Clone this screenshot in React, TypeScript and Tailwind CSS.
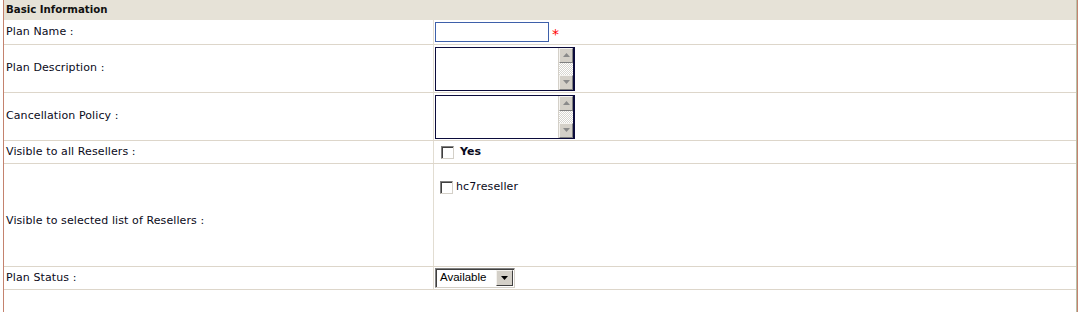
import React from "react";

function ScrollBox() {
  return (
    <div className="flex w-[140px] h-[44px] border border-[#0b0b3b] bg-white">
      <div className="flex-1" />
      <div className="flex flex-col w-[16px] border-l border-[#d4d0c8] border-r border-r-[#0b0b3b]">
        <div className="h-[15px] bg-[#d4d0c8] border-t border-l border-t-[#f4f2ee] border-l-[#f4f2ee] border-b border-r border-b-[#808080] border-r-[#808080] flex items-center justify-center">
          <svg width="7" height="4" viewBox="0 0 7 4"><path d="M3.5 0L7 4H0z" fill="#8a8a8a" /></svg>
        </div>
        <div className="flex-1 bg-[repeating-conic-gradient(#d8d6d0_0_25%,#ffffff_0_50%)] bg-[length:2px_2px]" />
        <div className="h-[15px] bg-[#d4d0c8] border-t border-l border-t-[#f4f2ee] border-l-[#f4f2ee] border-b border-r border-b-[#808080] border-r-[#808080] flex items-center justify-center">
          <svg width="7" height="4" viewBox="0 0 7 4"><path d="M0 0H7L3.5 4z" fill="#8a8a8a" /></svg>
        </div>
      </div>
    </div>
  );
}

function Check() {
  return <span className="inline-block w-[13px] h-[13px] bg-white border border-t-[#808080] border-l-[#808080] border-b-[#d4d0c8] border-r-[#d4d0c8] shadow-[inset_1px_1px_0_#404040]" />;
}

function Row({ label, h, labelPad, children }: { label: string; h: string; labelPad?: string; children?: React.ReactNode }) {
  return (
    <div className={`flex border-b border-[#ddd6ca] ${h}`}>
      <div className={`w-[430px] border-r border-[#e2ddd2] flex items-center pl-[2px] ${labelPad ?? ""}`}>{label}</div>
      <div className="flex-1 flex items-center pl-[1px]">{children}</div>
    </div>
  );
}

export default function App() {
  return (
    <div className="w-[1083px] h-[312px] bg-white overflow-hidden font-['DejaVu_Sans',sans-serif] text-[11px] tracking-[0.1px] text-[#0a0a20]">
      <div className="ml-[3px] w-[1075px] h-full border-l border-r border-[#c4826e]">
        <div className="border-r border-[#b8c0a8] h-full w-[1073px]">
          <div className="h-[20px] bg-[#e6e2d7] flex items-center pl-[2px] font-bold text-[10.2px] tracking-normal text-[#111]">Basic Information</div>
          <Row label="Plan Name :" h="h-[25px]">
            <input className="w-[114px] h-[20px] border border-[#3e60aa] outline-none" />
            <span className="text-[#ff0000] text-[14px] ml-[3px] mt-[4px]">*</span>
          </Row>
          <Row label="Plan Description :" h="h-[48px]">
            <ScrollBox />
          </Row>
          <Row label="Cancellation Policy :" h="h-[48px]">
            <ScrollBox />
          </Row>
          <Row label="Visible to all Resellers :" h="h-[23px]">
            <div className="flex items-center ml-[6px] gap-[6px]">
              <Check />
              <span className="font-bold">Yes</span>
            </div>
          </Row>
          <div className="flex border-b border-[#ddd6ca] h-[103px]">
            <div className="w-[430px] border-r border-[#e2ddd2] flex items-center pl-[2px] pt-[13px]">Visible to selected list of Resellers :</div>
            <div className="flex-1 pl-[6px] pt-[15px]">
              <div className="flex items-center gap-[3px]">
                <Check />
                <span>hc7reseller</span>
              </div>
            </div>
          </div>
          <Row label="Plan Status :" h="h-[23px]">
            <div className="flex w-[80px] h-[20px] border border-t-[#808080] border-l-[#808080] border-b-[#d4d0c8] border-r-[#d4d0c8] shadow-[inset_1px_1px_0_#404040] bg-white font-['Liberation_Sans',sans-serif] text-[11.5px] tracking-normal text-black">
              <div className="flex-1 flex items-center pl-[4px]">Available</div>
              <div className="w-[17px] m-[1px] ml-0 bg-[#d4d0c8] border border-t-[#f4f2ee] border-l-[#f4f2ee] border-b-[#404040] border-r-[#404040] flex items-center justify-center">
                <svg width="7" height="4" viewBox="0 0 7 4"><path d="M0 0H7L3.5 4z" fill="#000" /></svg>
              </div>
            </div>
          </Row>
        </div>
      </div>
    </div>
  );
}
